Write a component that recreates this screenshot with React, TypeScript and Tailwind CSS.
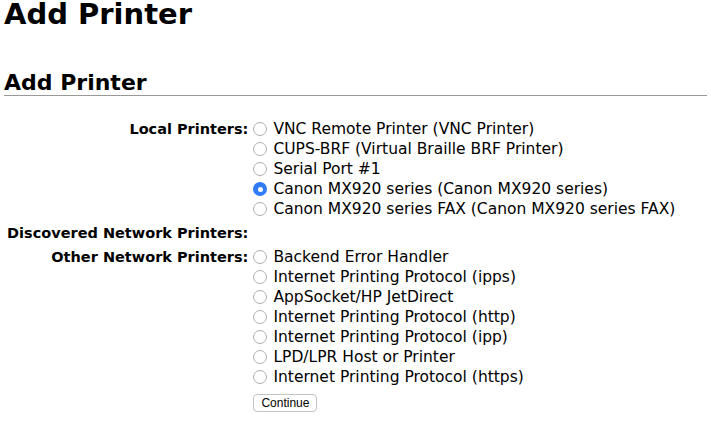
const localPrinters = [
  { label: 'VNC Remote Printer (VNC Printer)' },
  { label: 'CUPS-BRF (Virtual Braille BRF Printer)' },
  { label: 'Serial Port #1' },
  { label: 'Canon MX920 series (Canon MX920 series)', checked: true },
  { label: 'Canon MX920 series FAX (Canon MX920 series FAX)' },
]

const otherPrinters = [
  'Backend Error Handler',
  'Internet Printing Protocol (ipps)',
  'AppSocket/HP JetDirect',
  'Internet Printing Protocol (http)',
  'Internet Printing Protocol (ipp)',
  'LPD/LPR Host or Printer',
  'Internet Printing Protocol (https)',
]

function Radio({ checked }: { checked?: boolean }) {
  if (checked) {
    return (
      <span className="flex h-[14px] w-[14px] shrink-0 items-center justify-center rounded-full bg-[#2f7cf6]">
        <span className="h-[5px] w-[5px] rounded-full bg-white" />
      </span>
    )
  }
  return <span className="h-[14px] w-[14px] shrink-0 rounded-full border border-[#b0b0b0] bg-white" />
}

function Option({ label, checked }: { label: string; checked?: boolean }) {
  return (
    <label className="flex h-5 items-center gap-[6px]">
      <Radio checked={checked} />
      <span className="whitespace-nowrap">{label}</span>
    </label>
  )
}

export default function App() {
  return (
    <div className="h-[431px] overflow-hidden bg-white px-[4px] text-black font-['DejaVu_Sans',sans-serif]">
      <h1 className="text-[29px] font-bold leading-[28px] whitespace-nowrap">Add Printer</h1>

      <h2 className="mt-[43px] border-b border-[#999999] text-[22px] font-bold leading-[24px]">
        Add Printer
      </h2>

      <div className="mt-[23px] grid grid-cols-[auto_1fr] gap-x-[5px] text-[15.5px] leading-5">
        {/* Local */}
        <div className="pl-[3px] text-right text-[14.5px] font-bold whitespace-nowrap">Local Printers:</div>
        <div className="flex flex-col">
          {localPrinters.map((p) => (
            <Option key={p.label} label={p.label} checked={p.checked} />
          ))}
        </div>

        {/* Discovered */}
        <div className="mt-[4px] pl-[3px] text-right text-[14.5px] font-bold whitespace-nowrap">
          Discovered Network Printers:
        </div>
        <div />

        {/* Other */}
        <div className="mt-[4px] pl-[3px] text-right text-[14.5px] font-bold whitespace-nowrap">
          Other Network Printers:
        </div>
        <div className="mt-[4px] flex flex-col">
          {otherPrinters.map((p) => (
            <Option key={p} label={p} />
          ))}
          <div className="mt-[5px]">
            <button className="h-[18px] rounded-[4px] border border-[#c4c4c4] bg-white px-[7px] text-[12px] leading-[16px] font-['Liberation_Sans',sans-serif]">
              Continue
            </button>
          </div>
        </div>
      </div>
    </div>
  )
}
